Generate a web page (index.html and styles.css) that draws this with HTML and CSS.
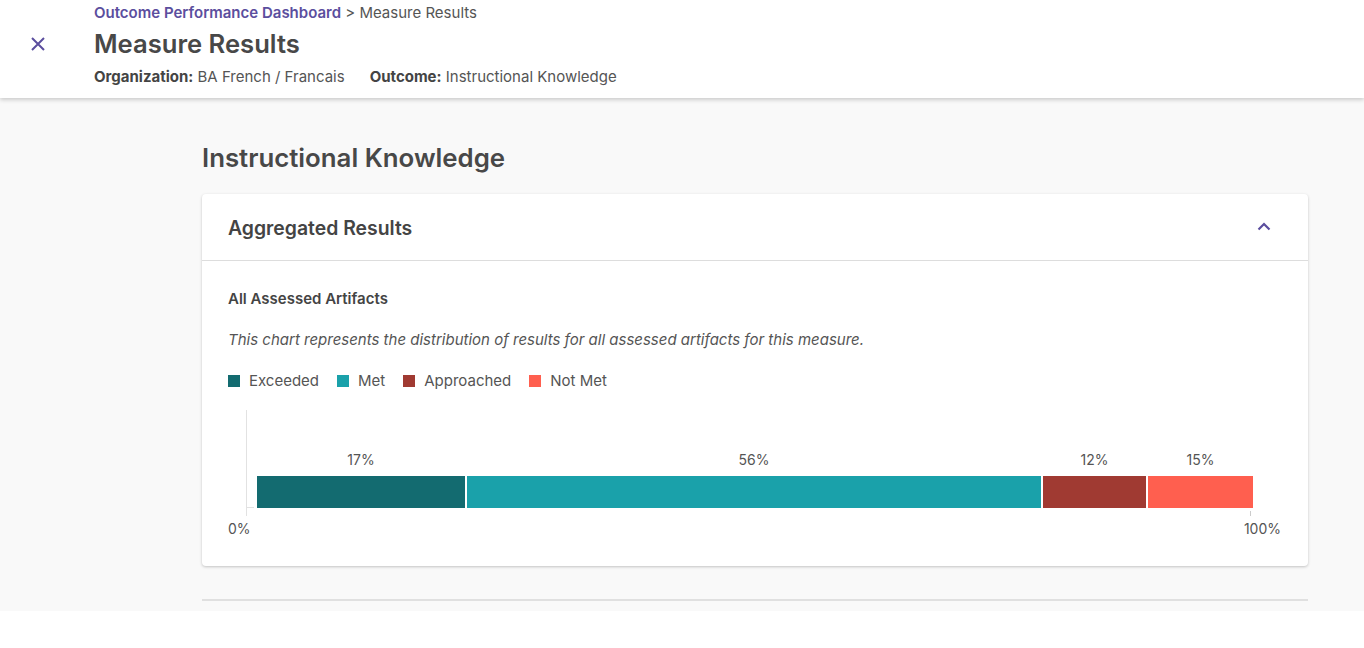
FILE: index.html
```html
<!DOCTYPE html>
<html>
<head>
<meta charset="utf-8">
<link rel="stylesheet" href="styles.css">
</head>
<body>
<header class="header">
  <div class="close-col">
    <svg class="close-icon" width="16" height="16" viewBox="0 0 16 16"><path d="M2 2 L14 14 M14 2 L2 14" stroke="#5b4e9e" stroke-width="2" fill="none"/></svg>
  </div>
  <div class="head-text">
    <div class="crumbs"><span class="crumb-link">Outcome Performance Dashboard</span> &gt; Measure Results</div>
    <h1 class="title">Measure Results</h1>
    <div class="meta"><span class="meta-item"><b>Organization:</b> BA French / Francais</span><span class="meta-item"><b>Outcome:</b> Instructional Knowledge</span></div>
  </div>
</header>
<main class="main">
  <h2 class="section-title">Instructional Knowledge</h2>
  <section class="card">
    <div class="card-head">
      <span class="card-title">Aggregated Results</span>
      <svg class="chevron" width="14" height="9" viewBox="0 0 14 9"><polyline points="1.5,7.5 7,2 12.5,7.5" stroke="#5b4e9e" stroke-width="2.2" fill="none"/></svg>
    </div>
    <div class="card-body">
      <div class="sub-title">All Assessed Artifacts</div>
      <p class="desc">This chart represents the distribution of results for all assessed artifacts for this measure.</p>
      <div class="legend">
        <span class="legend-item"><i class="sw exceeded"></i>Exceeded</span>
        <span class="legend-item"><i class="sw met"></i>Met</span>
        <span class="legend-item"><i class="sw approached"></i>Approached</span>
        <span class="legend-item"><i class="sw notmet"></i>Not Met</span>
      </div>
      <div class="chart">
        <div class="plot">
          <div class="labels">
            <span style="width:208px">17%</span>
            <span style="width:574px">56%</span>
            <span style="width:103px">12%</span>
            <span style="width:105px">15%</span>
          </div>
          <div class="bars">
            <span class="bar exceeded" style="width:208px"></span>
            <span class="bar met" style="width:574px"></span>
            <span class="bar approached" style="width:103px"></span>
            <span class="bar notmet" style="width:105px"></span>
          </div>
          <span class="tick-end"></span>
        </div>
        <div class="axis-labels"><span>0%</span><span>100%</span></div>
      </div>
    </div>
  </section>
  <div class="divider"></div>
</main>
</body>
</html>
```
FILE: styles.css
```css
* { box-sizing: border-box; }
body {
  margin: 0;
  font-family: Inter, "Noto Sans", "Liberation Sans", sans-serif;
  color: #444;
  background: #fff;
}
.header {
  position: relative;
  z-index: 1;
  display: flex;
  height: 98px;
  background: #fff;
  box-shadow: 0 2px 4px rgba(0,0,0,0.18);
}
.close-col {
  width: 94px;
  display: flex;
  justify-content: center;
  padding-top: 36px;
  padding-right: 18px;
}
.close-icon { display: block; }
.head-text { padding-top: 4px; }
.crumbs {
  font-size: 15px;
  line-height: 18px;
  color: #555;
}
.crumb-link { color: #5b4e9e; font-weight: 600; }
.title {
  margin: 6px 0 0;
  font-size: 25.6px;
  line-height: 32px;
  font-weight: 600;
  color: #484848;
}
.meta {
  margin-top: 8px;
  font-size: 15px;
  line-height: 18px;
  color: #555;
  display: flex;
  gap: 25px;
}
.meta b { font-weight: 700; color: #444; }
.main {
  background: #f9f9f9;
  height: 513px;
  padding: 45px 56px 0 202px;
}
.section-title {
  margin: 0 0 21px;
  font-size: 25.8px;
  line-height: 30px;
  font-weight: 600;
  color: #484848;
}
.card {
  background: #fff;
  border-radius: 4px;
  box-shadow: 0 1px 3px rgba(0,0,0,0.22);
}
.card-head {
  height: 67px;
  border-bottom: 1px solid #ddd;
  display: flex;
  align-items: center;
  justify-content: space-between;
  padding: 2px 37px 0 26px;
}
.card-title {
  font-size: 19.4px;
  font-weight: 600;
  color: #444;
}
.chevron { display: block; margin-top: -3px; }
.card-body {
  padding: 29px 26px 28px;
}
.sub-title {
  font-size: 15px;
  line-height: 18px;
  font-weight: 600;
  color: #444;
}
.desc {
  margin: 23px 0 0;
  font-size: 15px;
  line-height: 18px;
  font-style: italic;
  color: #555;
}
.legend {
  margin-top: 23px;
  display: flex;
  gap: 18px;
  font-size: 15px;
  line-height: 18px;
  color: #555;
}
.legend-item { display: flex; align-items: center; }
.sw {
  display: inline-block;
  width: 12px;
  height: 12px;
  margin-right: 9px;
}
.exceeded { background: #136b70; }
.met { background: #1aa1aa; }
.approached { background: #a03a32; }
.notmet { background: #ff5f4f; }
.chart { margin-top: 20px; }
.plot {
  position: relative;
  margin-left: 18px;
  width: 1007px;
  border-left: 1px solid #e2e2e2;
  padding: 41px 0 8px 10px;
}
.plot::after {
  content: "";
  position: absolute;
  left: -1px;
  top: 97px;
  width: 8px;
  height: 1px;
  background: #e2e2e2;
}
.tick-end {
  position: absolute;
  left: 1003px;
  top: 101px;
  width: 1px;
  height: 5px;
  background: #ccc;
}
.labels, .bars { display: flex; gap: 2px; }
.labels span {
  text-align: center;
  font-size: 14px;
  line-height: 18px;
  color: #555;
}
.bars { margin-top: 7px; }
.bar { height: 32px; display: block; }
.axis-labels {
  margin-top: 4px;
  display: flex;
  justify-content: space-between;
  font-size: 14px;
  line-height: 18px;
  color: #555;
  width: 1053px;
}
.divider {
  margin-top: 33px;
  height: 2px;
  background: #e0e0e0;
}
```
